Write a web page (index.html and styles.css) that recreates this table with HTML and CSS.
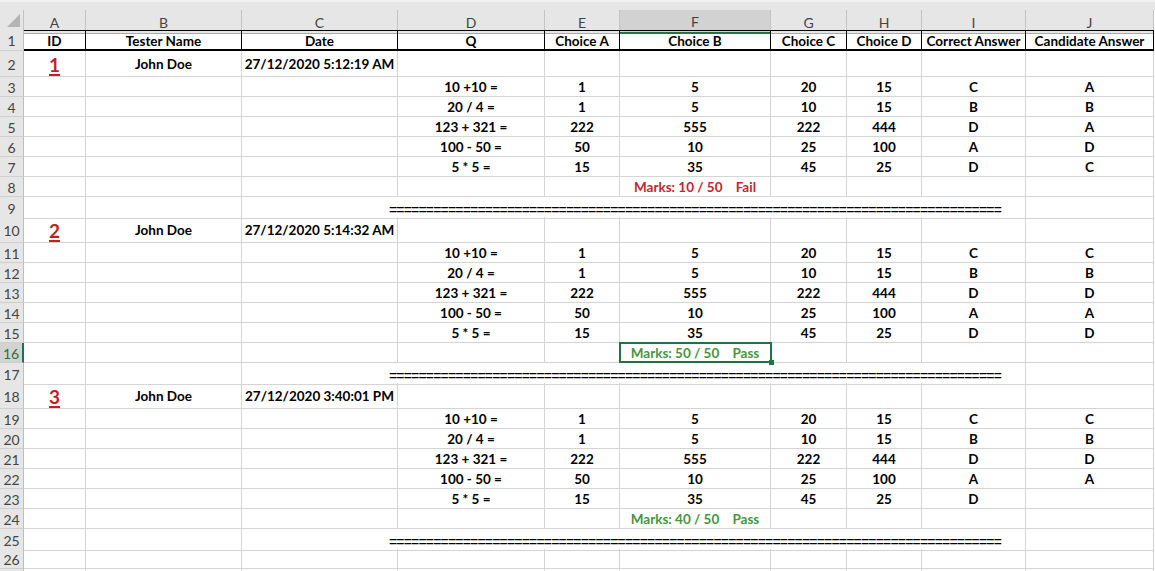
FILE: index.html
```html
<!DOCTYPE html>
<html>
<head>
<meta charset="utf-8">
<link rel="stylesheet" href="styles.css">
</head>
<body>
<div class="sheet">
  <div class="topband"></div>
  <div class="row colhead">
    <div class="ch corner"><svg width="24" height="20" viewBox="0 0 24 20"><polygon points="7,17 20,17 20,4" fill="#b4b4b4"/></svg></div>
    <div class="ch">A</div><div class="ch">B</div><div class="ch">C</div><div class="ch">D</div><div class="ch">E</div>
    <div class="ch sel">F</div><div class="ch">G</div><div class="ch">H</div><div class="ch">I</div><div class="ch">J</div>
  </div>

  <div class="row hdr">
    <div class="c rh">1</div>
    <div class="c">ID</div><div class="c">Tester Name</div><div class="c">Date</div><div class="c">Q</div><div class="c">Choice A</div>
    <div class="c">Choice B</div><div class="c">Choice C</div><div class="c">Choice D</div><div class="c">Correct Answer</div><div class="c">Candidate Answer</div>
  </div>

  <!-- Test 1 -->
  <div class="row tall">
    <div class="c rh">2</div>
    <div class="c"><span class="id">1</span></div><div class="c">John Doe</div><div class="c">27/12/2020 5:12:19 AM</div>
    <div class="c"></div><div class="c"></div><div class="c"></div><div class="c"></div><div class="c"></div><div class="c"></div><div class="c"></div>
  </div>
  <div class="row"><div class="c rh">3</div><div class="c"></div><div class="c"></div><div class="c"></div><div class="c">10 +10 =</div><div class="c">1</div><div class="c">5</div><div class="c">20</div><div class="c">15</div><div class="c">C</div><div class="c">A</div></div>
  <div class="row"><div class="c rh">4</div><div class="c"></div><div class="c"></div><div class="c"></div><div class="c">20 / 4 =</div><div class="c">1</div><div class="c">5</div><div class="c">10</div><div class="c">15</div><div class="c">B</div><div class="c">B</div></div>
  <div class="row"><div class="c rh">5</div><div class="c"></div><div class="c"></div><div class="c"></div><div class="c">123 + 321 =</div><div class="c">222</div><div class="c">555</div><div class="c">222</div><div class="c">444</div><div class="c">D</div><div class="c">A</div></div>
  <div class="row"><div class="c rh">6</div><div class="c"></div><div class="c"></div><div class="c"></div><div class="c">100 - 50 =</div><div class="c">50</div><div class="c">10</div><div class="c">25</div><div class="c">100</div><div class="c">A</div><div class="c">D</div></div>
  <div class="row"><div class="c rh">7</div><div class="c"></div><div class="c"></div><div class="c"></div><div class="c">5 * 5 =</div><div class="c">15</div><div class="c">35</div><div class="c">45</div><div class="c">25</div><div class="c">D</div><div class="c">C</div></div>
  <div class="row"><div class="c rh">8</div><div class="c"></div><div class="c"></div><div class="c"></div><div class="c"></div><div class="c"></div><div class="c"><span class="marks fail">Marks: 10 / 50    Fail</span></div><div class="c"></div><div class="c"></div><div class="c"></div><div class="c"></div></div>
  <div class="row"><div class="c rh">9</div><div class="c"></div><div class="c"></div><div class="c nb"></div><div class="c nb"></div><div class="c nb"></div><div class="c nb sep"><span class="eq">===================================================================================</span></div><div class="c nb"></div><div class="c nb"></div><div class="c"></div><div class="c"></div></div>

  <!-- Test 2 -->
  <div class="row tall">
    <div class="c rh">10</div>
    <div class="c"><span class="id">2</span></div><div class="c">John Doe</div><div class="c">27/12/2020 5:14:32 AM</div>
    <div class="c"></div><div class="c"></div><div class="c"></div><div class="c"></div><div class="c"></div><div class="c"></div><div class="c"></div>
  </div>
  <div class="row"><div class="c rh">11</div><div class="c"></div><div class="c"></div><div class="c"></div><div class="c">10 +10 =</div><div class="c">1</div><div class="c">5</div><div class="c">20</div><div class="c">15</div><div class="c">C</div><div class="c">C</div></div>
  <div class="row"><div class="c rh">12</div><div class="c"></div><div class="c"></div><div class="c"></div><div class="c">20 / 4 =</div><div class="c">1</div><div class="c">5</div><div class="c">10</div><div class="c">15</div><div class="c">B</div><div class="c">B</div></div>
  <div class="row"><div class="c rh">13</div><div class="c"></div><div class="c"></div><div class="c"></div><div class="c">123 + 321 =</div><div class="c">222</div><div class="c">555</div><div class="c">222</div><div class="c">444</div><div class="c">D</div><div class="c">D</div></div>
  <div class="row"><div class="c rh">14</div><div class="c"></div><div class="c"></div><div class="c"></div><div class="c">100 - 50 =</div><div class="c">50</div><div class="c">10</div><div class="c">25</div><div class="c">100</div><div class="c">A</div><div class="c">A</div></div>
  <div class="row"><div class="c rh">15</div><div class="c"></div><div class="c"></div><div class="c"></div><div class="c">5 * 5 =</div><div class="c">15</div><div class="c">35</div><div class="c">45</div><div class="c">25</div><div class="c">D</div><div class="c">D</div></div>
  <div class="row"><div class="c rh sel">16</div><div class="c"></div><div class="c"></div><div class="c"></div><div class="c"></div><div class="c"></div><div class="c active"><span class="marks pass">Marks: 50 / 50    Pass</span></div><div class="c"></div><div class="c"></div><div class="c"></div><div class="c"></div></div>
  <div class="row"><div class="c rh">17</div><div class="c"></div><div class="c"></div><div class="c nb"></div><div class="c nb"></div><div class="c nb"></div><div class="c nb sep"><span class="eq">===================================================================================</span></div><div class="c nb"></div><div class="c nb"></div><div class="c"></div><div class="c"></div></div>

  <!-- Test 3 -->
  <div class="row tall">
    <div class="c rh">18</div>
    <div class="c"><span class="id">3</span></div><div class="c">John Doe</div><div class="c">27/12/2020 3:40:01 PM</div>
    <div class="c"></div><div class="c"></div><div class="c"></div><div class="c"></div><div class="c"></div><div class="c"></div><div class="c"></div>
  </div>
  <div class="row"><div class="c rh">19</div><div class="c"></div><div class="c"></div><div class="c"></div><div class="c">10 +10 =</div><div class="c">1</div><div class="c">5</div><div class="c">20</div><div class="c">15</div><div class="c">C</div><div class="c">C</div></div>
  <div class="row"><div class="c rh">20</div><div class="c"></div><div class="c"></div><div class="c"></div><div class="c">20 / 4 =</div><div class="c">1</div><div class="c">5</div><div class="c">10</div><div class="c">15</div><div class="c">B</div><div class="c">B</div></div>
  <div class="row"><div class="c rh">21</div><div class="c"></div><div class="c"></div><div class="c"></div><div class="c">123 + 321 =</div><div class="c">222</div><div class="c">555</div><div class="c">222</div><div class="c">444</div><div class="c">D</div><div class="c">D</div></div>
  <div class="row"><div class="c rh">22</div><div class="c"></div><div class="c"></div><div class="c"></div><div class="c">100 - 50 =</div><div class="c">50</div><div class="c">10</div><div class="c">25</div><div class="c">100</div><div class="c">A</div><div class="c">A</div></div>
  <div class="row"><div class="c rh">23</div><div class="c"></div><div class="c"></div><div class="c"></div><div class="c">5 * 5 =</div><div class="c">15</div><div class="c">35</div><div class="c">45</div><div class="c">25</div><div class="c">D</div><div class="c"></div></div>
  <div class="row"><div class="c rh">24</div><div class="c"></div><div class="c"></div><div class="c"></div><div class="c"></div><div class="c"></div><div class="c"><span class="marks pass">Marks: 40 / 50    Pass</span></div><div class="c"></div><div class="c"></div><div class="c"></div><div class="c"></div></div>
  <div class="row"><div class="c rh">25</div><div class="c"></div><div class="c"></div><div class="c nb"></div><div class="c nb"></div><div class="c nb"></div><div class="c nb sep"><span class="eq">===================================================================================</span></div><div class="c nb"></div><div class="c nb"></div><div class="c"></div><div class="c"></div></div>
  <div class="row"><div class="c rh">26</div><div class="c"></div><div class="c"></div><div class="c"></div><div class="c"></div><div class="c"></div><div class="c"></div><div class="c"></div><div class="c"></div><div class="c"></div><div class="c"></div></div>
  <div class="row"><div class="c rh"></div><div class="c"></div><div class="c"></div><div class="c"></div><div class="c"></div><div class="c"></div><div class="c"></div><div class="c"></div><div class="c"></div><div class="c"></div><div class="c"></div></div>
</div>
</body>
</html>
```

FILE: styles.css
```css
html, body {
  margin: 0;
  padding: 0;
  background: #ffffff;
}

.sheet {
  width: 1155px;
  height: 571px;
  overflow: hidden;
  font-family: Lato, "Liberation Sans", sans-serif;
  color: #000;
}

.topband {
  height: 10px;
  box-sizing: border-box;
  background: #e6e6e6;
  border-top: 2px solid #f1f1f1;
}

.row {
  display: grid;
  grid-template-columns: 24px 62px 156px 156px 147px 75px 151px 76px 75px 104px 128px;
  height: 20px;
}

.row.tall {
  height: 26px;
}

.row.hdr {
  height: 21px;
}

/* column header */
.ch {
  box-sizing: border-box;
  background: #e6e6e6;
  border-right: 1px solid #c3c3c3;
  border-bottom: 1px solid #a9a9a9;
  color: #444;
  font-size: 14px;
  display: flex;
  align-items: center;
  justify-content: center;
  padding-top: 1px;
}

.ch.corner {
  padding: 0;
  display: block;
}

.ch.sel {
  background: #d2d2d2;
  border-bottom: 2px solid #217346;
  color: #444;
}

/* cells */
.c {
  box-sizing: border-box;
  min-width: 0;
  border-right: 1px solid #d4d4d4;
  border-bottom: 1px solid #d4d4d4;
  display: flex;
  align-items: center;
  justify-content: center;
  padding-top: 1px;
  font-size: 13.5px;
  font-weight: 700;
  white-space: nowrap;
}

.c.nb {
  border-right-color: transparent;
}

.c.rh {
  background: #e6e6e6;
  color: #444;
  font-size: 14px;
  font-weight: 400;
  border-right-color: #bdbdbd;
  border-bottom-color: #cfcfcf;
}

.c.rh.sel {
  background: #d2d2d2;
  border-right: 2px solid #217346;
  color: #217346;
}

.hdr .c:not(.rh) {
  border-top: 1px solid #000;
  border-right-color: #000;
  border-bottom: 2px solid #000;
}

.id {
  color: #c41e24;
  font-size: 19px;
  text-decoration: underline;
  text-decoration-thickness: 2px;
  text-underline-offset: 2px;
}

.marks {
  white-space: pre;
}

.marks.fail {
  color: #c4262d;
}

.marks.pass {
  color: #46953f;
}

.sep {
  padding-top: 5px;
}

.eq {
  font-family: "Liberation Sans", sans-serif;
  font-weight: 400;
  font-size: 14px;
  letter-spacing: -0.8px;
  color: #000;
}

.active {
  position: relative;
}

.active::before {
  content: "";
  position: absolute;
  top: -1px;
  left: -1px;
  right: -2px;
  bottom: -1px;
  border: 2px solid #217346;
  z-index: 2;
}

.active::after {
  content: "";
  position: absolute;
  right: -4px;
  bottom: -3px;
  width: 5px;
  height: 5px;
  background: #217346;
  z-index: 3;
}
```
